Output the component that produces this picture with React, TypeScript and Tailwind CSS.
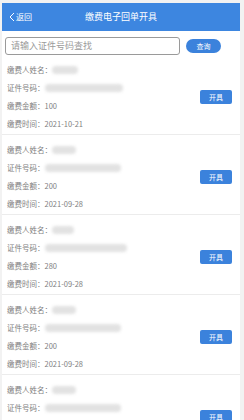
import React from 'react';

type Record = { amount: string; time: string; nameW: number; idW: number };

const records: Record[] = [
  { amount: '100', time: '2021-10-21', nameW: 26, idW: 78 },
  { amount: '200', time: '2021-09-28', nameW: 24, idW: 76 },
  { amount: '280', time: '2021-09-28', nameW: 22, idW: 82 },
  { amount: '200', time: '2021-09-28', nameW: 24, idW: 76 },
  { amount: '200', time: '2021-09-28', nameW: 24, idW: 76 },
];

const font = { fontFamily: '"Noto Sans CJK SC", "Noto Sans", sans-serif' };

const Blur: React.FC<{ w: number }> = ({ w }) => (
  <span className="inline-block h-[8px] rounded-full bg-[#e2e2e2] blur-[1.5px]" style={{ width: w }} />
);

const Card: React.FC<{ r: Record; first?: boolean }> = ({ r, first }) => (
  <div className={`flex items-center bg-white border-b border-[#ececec] pl-[5px] pr-[8px] ${first ? 'pt-0 pb-[1px]' : 'pt-[6px] pb-[1px]'}`}>
    <div className="flex-1 text-[7.5px] text-[#808080]">
      <div className="h-[18px] flex items-center">缴费人姓名：<Blur w={r.nameW} /></div>
      <div className="h-[18px] flex items-center">证件号码：<Blur w={r.idW} /></div>
      <div className="h-[18px] flex items-center">缴费金额：{r.amount}</div>
      <div className="h-[18px] flex items-center">缴费时间：{r.time}</div>
    </div>
    <button className="w-[32px] h-[14px] rounded-[2px] bg-[#3b82dc] text-white text-[7px] leading-none flex items-center justify-center">开具</button>
  </div>
);

export default function App() {
  return (
    <div className="w-[244px] h-[420px] overflow-hidden bg-[#f2f2f2] pt-[3px] pl-[2px] pr-[4px]" style={font}>
      <div className="h-[28px] bg-[#3d86e0] relative flex items-center justify-center text-white">
        <div className="absolute left-[7px] top-0 h-full flex items-center text-[8px]">
          <svg width="6" height="10" viewBox="0 0 6 10" className="mr-[1px]">
            <path d="M5 1 L1 5 L5 9" fill="none" stroke="white" strokeWidth="1" />
          </svg>
          返回
        </div>
        <span className="text-[9px]">缴费电子回单开具</span>
      </div>
      <div className="bg-white h-[30px] flex items-center pl-[3px] pr-[19px]">
        <div className="w-[175px] h-[18px] border border-[#9a9a9a] rounded-[3px] flex items-center pl-[5px] text-[9px] text-[#9a9a9a]">
          请输入证件号码查找
        </div>
        <button className="ml-auto w-[35px] h-[14px] rounded-full bg-[#3b82dc] text-white text-[7px] leading-none flex items-center justify-center">查询</button>
      </div>
      {records.map((r, i) => (
        <Card key={i} r={r} first={i === 0} />
      ))}
    </div>
  );
}
